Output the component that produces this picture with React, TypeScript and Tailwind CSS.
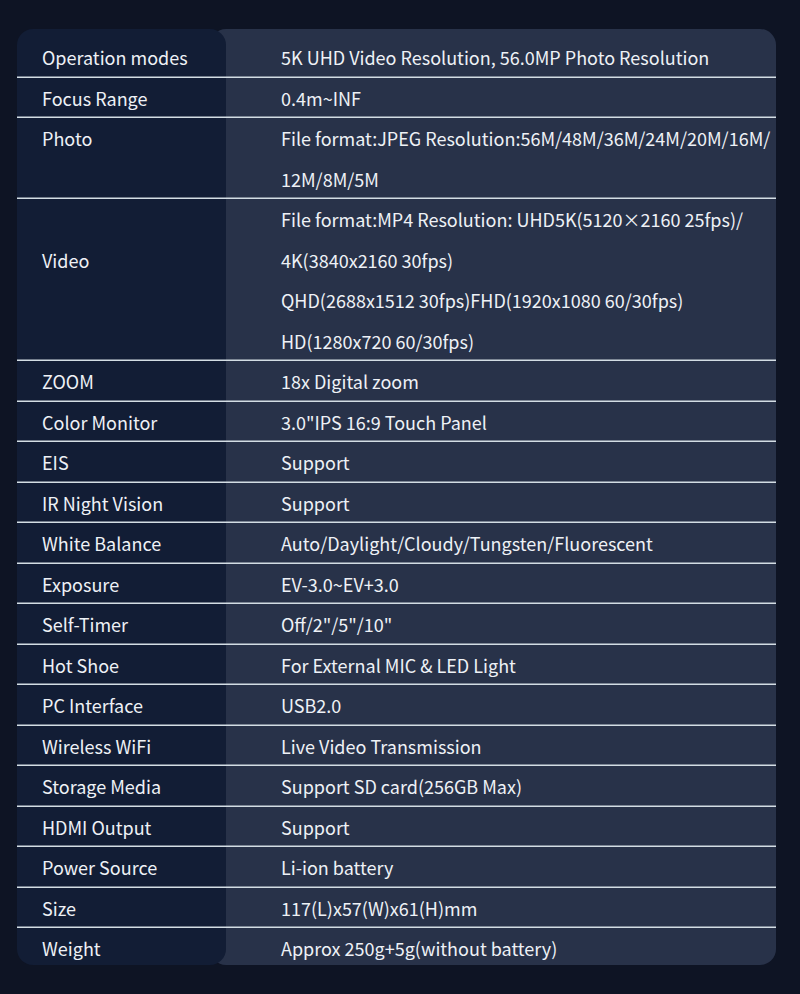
import React from "react";

type Row = { label: string; labelLine?: number; lines: string[] };

const rows: Row[] = [
  { label: "Operation modes", lines: ["5K UHD Video Resolution, 56.0MP Photo Resolution"] },
  { label: "Focus Range", lines: ["0.4m~INF"] },
  { label: "Photo", lines: ["File format:JPEG Resolution:56M/48M/36M/24M/20M/16M/", "12M/8M/5M"] },
  {
    label: "Video",
    labelLine: 1,
    lines: [
      "File format:MP4 Resolution: UHD5K(5120×2160 25fps)/",
      "4K(3840x2160 30fps)",
      "QHD(2688x1512 30fps)FHD(1920x1080 60/30fps)",
      "HD(1280x720 60/30fps)",
    ],
  },
  { label: "ZOOM", lines: ["18x Digital zoom"] },
  { label: "Color Monitor", lines: ['3.0"IPS 16:9 Touch Panel'] },
  { label: "EIS", lines: ["Support"] },
  { label: "IR Night Vision", lines: ["Support"] },
  { label: "White Balance", lines: ["Auto/Daylight/Cloudy/Tungsten/Fluorescent"] },
  { label: "Exposure", lines: ["EV-3.0~EV+3.0"] },
  { label: "Self-Timer", lines: ['Off/2"/5"/10"'] },
  { label: "Hot Shoe", lines: ["For External MIC & LED Light"] },
  { label: "PC Interface", lines: ["USB2.0"] },
  { label: "Wireless WiFi", lines: ["Live Video Transmission"] },
  { label: "Storage Media", lines: ["Support SD card(256GB Max)"] },
  { label: "HDMI Output", lines: ["Support"] },
  { label: "Power Source", lines: ["Li-ion battery"] },
  { label: "Size", lines: ["117(L)x57(W)x61(H)mm"] },
  { label: "Weight", lines: ["Approx 250g+5g(without battery)"] },
];

const LINE = "shadow-[inset_0_-1.5px_0_#d3dde4]";

export default function App() {
  return (
    <div
      className="w-[800px] h-[994px] bg-[#0e1424] pt-[29px] pl-[17px] text-[18px] text-[#eef1f6]"
      style={{ fontFamily: '"Noto Sans CJK SC", "Noto Sans", sans-serif' }}
    >
      <div className="flex w-[759px] h-[936px] overflow-hidden">
        <div className="w-[209px] shrink-0 bg-[#121d35] rounded-2xl pt-[8px] relative z-10">
          {rows.map((r, i) => (
            <div
              key={i}
              className={`pl-[25px] leading-[40.5px] ${i < rows.length - 1 ? LINE : ""}`}
              style={{ height: `${r.lines.length * 40.5}px` }}
            >
              {r.labelLine ? <div className="h-[40.5px]" /> : null}
              <div>{r.label}</div>
            </div>
          ))}
        </div>
        <div className="flex-1 min-w-0 overflow-hidden -ml-4 bg-[#283249] rounded-2xl pt-[8px]">
          {rows.map((r, i) => (
            <div
              key={i}
              className={`pl-[71px] leading-[40.5px] whitespace-nowrap ${i < rows.length - 1 ? LINE : ""}`}
            >
              {r.lines.map((l, j) => (
                <div key={j}>{l}</div>
              ))}
            </div>
          ))}
        </div>
      </div>
    </div>
  );
}
